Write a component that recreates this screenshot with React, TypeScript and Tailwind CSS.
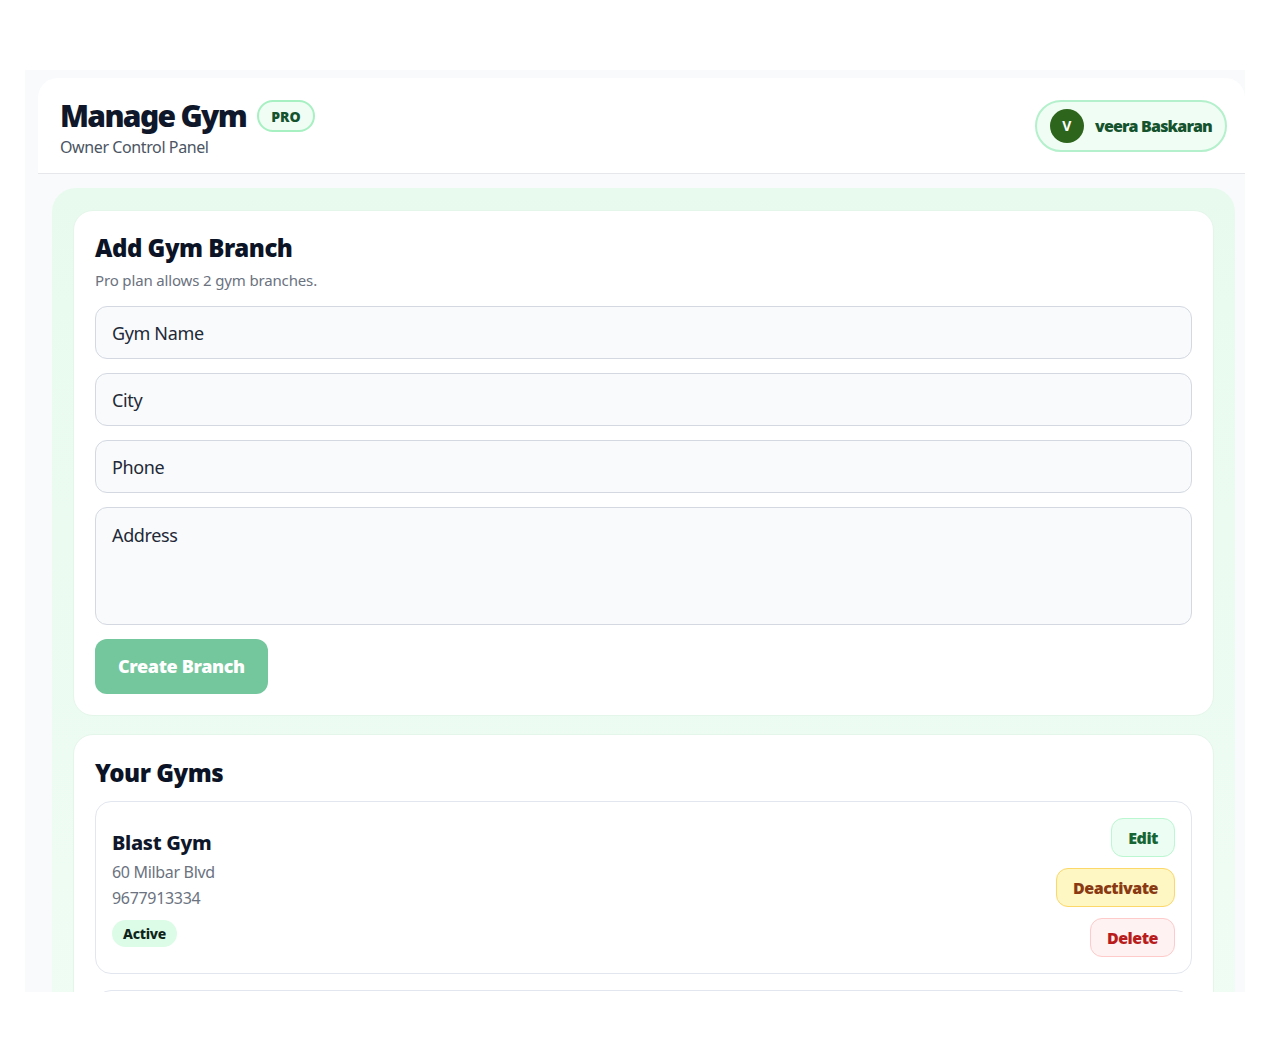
import React from "react";

const sans = { fontFamily: '"Noto Sans", "Open Sans", Arial, sans-serif' };

function Field({ label }: { label: string }) {
  return (
    <input
      placeholder={label}
      className="h-[53px] w-full rounded-[12px] border border-[#d4d8e0] bg-[#f8fafc] px-4 text-[18px] tracking-[-0.02em] text-[#1f2937] outline-none placeholder:text-[#1f2937]"
    />
  );
}

function ActionButton({ label, tone }: { label: string; tone: string }) {
  return (
    <button
      className={`h-[39px] rounded-[12px] border px-4 text-[16px] font-black tracking-[-0.03em] ${tone}`}
    >
      {label}
    </button>
  );
}

export default function App() {
  return (
    <div className="h-[1064px] bg-white pl-[25px] pr-[27px] pt-[70px]" style={sans}>
      <div className="h-[922px] overflow-hidden bg-[#f8fafc] pl-[13px] pt-[8px]">
        {/* top bar */}
        <header className="flex h-[96px] items-center justify-between rounded-t-[20px] border-b border-[#e5e7eb] bg-white pl-[22px] pr-[18px]">
          <div className="mt-[6px]">
            <div className="flex items-center">
              <h1 className="text-[30px] font-black leading-9 tracking-[-0.055em] text-[#0f172a]">
                Manage Gym
              </h1>
              <span className="ml-[11px] flex h-[32px] items-center rounded-full border-2 border-[#a7f0c2] bg-[#f0fdf4] px-[12px] text-[14px] font-black text-[#14532d]">
                PRO
              </span>
            </div>
            <div className="mt-[1px] text-[16px] leading-6 tracking-[-0.025em] text-[#4b5563]">Owner Control Panel</div>
          </div>
          <div className="flex h-[52px] items-center gap-[11px] rounded-full border-2 border-[#b4f0cc] bg-[#f0fdf4] pl-[13px] pr-[13px]">
            <div className="flex h-[34px] w-[34px] items-center justify-center rounded-full bg-[#2e651c] text-[14px] font-bold text-white">
              V
            </div>
            <span className="text-[16px] font-black tracking-[-0.05em] text-[#14532d]">veera Baskaran</span>
          </div>
        </header>

        <main className="ml-[14px] mr-[10px] pt-[14px]">
          <div className="rounded-[24px] bg-gradient-to-b from-[#e8faee] to-[#f1fdf5] px-[21px] pt-[22px] pb-[22px]">
            {/* new branch form */}
            <section className="rounded-[20px] border border-[#e4f6ea] bg-white px-[21px] pt-[21px] pb-[21px]">
              <h2 className="text-[24px] font-black leading-8 tracking-[-0.02em] text-[#0b1326]">Add Gym Branch</h2>
              <p className="mt-[6px] text-[15px] leading-5 tracking-[-0.01em] text-[#6b7280]">
                Pro plan allows 2 gym branches.
              </p>
              <div className="mt-[16px] flex flex-col gap-[14px]">
                <Field label="Gym Name" />
                <Field label="City" />
                <Field label="Phone" />
                <textarea
                  placeholder="Address"
                  className="h-[118px] w-full resize-none rounded-[12px] border border-[#d4d8e0] bg-[#f8fafc] px-4 pt-[14px] text-[18px] tracking-[-0.02em] text-[#1f2937] outline-none placeholder:text-[#1f2937]"
                />
              </div>
              <button className="mt-[14px] h-[55px] rounded-[12px] bg-[#74c69d] px-[23px] text-[18px] font-black tracking-[-0.02em] text-white">
                Create Branch
              </button>
            </section>

            {/* branch list */}
            <section className="mt-[18px] rounded-[20px] border border-[#e4f6ea] bg-white px-[21px] pt-[22px] pb-[21px]">
              <h2 className="text-[24px] font-black leading-8 tracking-[-0.02em] text-[#0b1326]">Your Gyms</h2>
              <div className="mt-[12px] flex flex-col gap-[16px]">
                <div className="flex items-center justify-between rounded-[16px] border border-[#e2e6ee] bg-white p-4">
                  <div className="flex flex-col items-start">
                    <div className="text-[20px] font-extrabold leading-7 tracking-[-0.015em] text-[#0f172a]">
                      Blast Gym
                    </div>
                    <div className="mt-[3px] text-[16px] leading-6 tracking-[-0.02em] text-[#6b7280]">
                      60 Milbar Blvd
                    </div>
                    <div className="mt-[2px] text-[16px] leading-6 tracking-[-0.02em] text-[#6b7280]">
                      9677913334
                    </div>
                    <span className="mt-[10px] flex h-[27px] items-center rounded-full bg-[#dcfce7] px-[11px] text-[14px] font-extrabold tracking-[-0.02em] text-[#0f2419]">
                      Active
                    </span>
                  </div>
                  <div className="flex flex-col items-end gap-[11px]">
                    <ActionButton label="Edit" tone="border-[#bbf7d0] bg-[#ecfdf3] text-[#166534]" />
                    <ActionButton label="Deactivate" tone="border-[#fcd769] bg-[#fef7c3] text-[#8a3a12]" />
                    <ActionButton label="Delete" tone="border-[#fecaca] bg-[#fef2f2] text-[#b91c1c]" />
                  </div>
                </div>
                {/* next branch card, scrolled below the fold */}
                <div className="h-[172px] rounded-[16px] border border-[#e2e6ee] bg-white" />
              </div>
            </section>
          </div>
        </main>
      </div>
    </div>
  );
}
